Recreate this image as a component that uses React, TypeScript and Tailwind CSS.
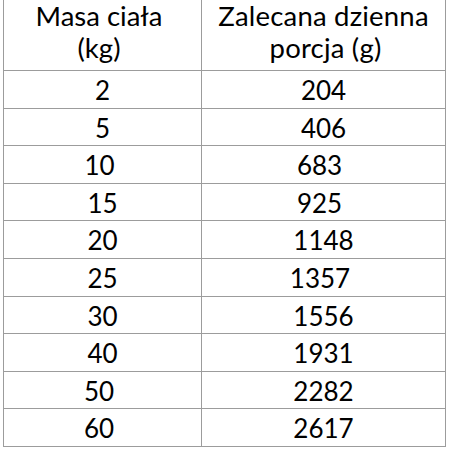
const rows: { kg: string; g: string; kgShift?: string; gShift?: string }[] = [
  { kg: "2", g: "204" },
  { kg: "5", g: "406" },
  { kg: "10", g: "683", kgShift: "pr-[6px]", gShift: "pr-[8px]" },
  { kg: "15", g: "925", gShift: "pr-[8px]" },
  { kg: "20", g: "1148" },
  { kg: "25", g: "1357", gShift: "pr-[7px]" },
  { kg: "30", g: "1556" },
  { kg: "40", g: "1931" },
  { kg: "50", g: "2282", kgShift: "pr-[7px]" },
  { kg: "60", g: "2617", kgShift: "pr-[7px]" },
];

export default function App() {
  return (
    <div
      className="w-[450px] h-[449px] bg-white text-black overflow-hidden"
      style={{ fontFamily: "Lato, 'Open Sans', sans-serif" }}
    >
      <div className="ml-[3px] grid grid-cols-[199px_244px] text-[26px]">
        <div className="h-[71px] border-l border-r border-b border-[#9c9c9c] flex flex-col items-center text-[27.5px] leading-[32px] pr-[7px]">
          <span>Masa ciała</span>
          <span>(kg)</span>
        </div>
        <div className="h-[71px] border-r border-b border-[#9c9c9c] flex flex-col items-center text-[27.5px] leading-[32px] tracking-[0.2px]">
          <span>Zalecana dzienna</span>
          <span className="pl-[4px]">porcja (g)</span>
        </div>
        {rows.map((r) => (
          <div key={r.kg} className="contents">
            <div
              className={`h-[37.6px] border-l border-r border-b border-[#9c9c9c] text-center leading-[34px] pt-[2px] ${r.kgShift ?? ""}`}
            >
              {r.kg}
            </div>
            <div
              className={`h-[37.6px] border-r border-b border-[#9c9c9c] text-center leading-[34px] pt-[2px] ${r.gShift ?? ""}`}
            >
              {r.g}
            </div>
          </div>
        ))}
      </div>
    </div>
  );
}
